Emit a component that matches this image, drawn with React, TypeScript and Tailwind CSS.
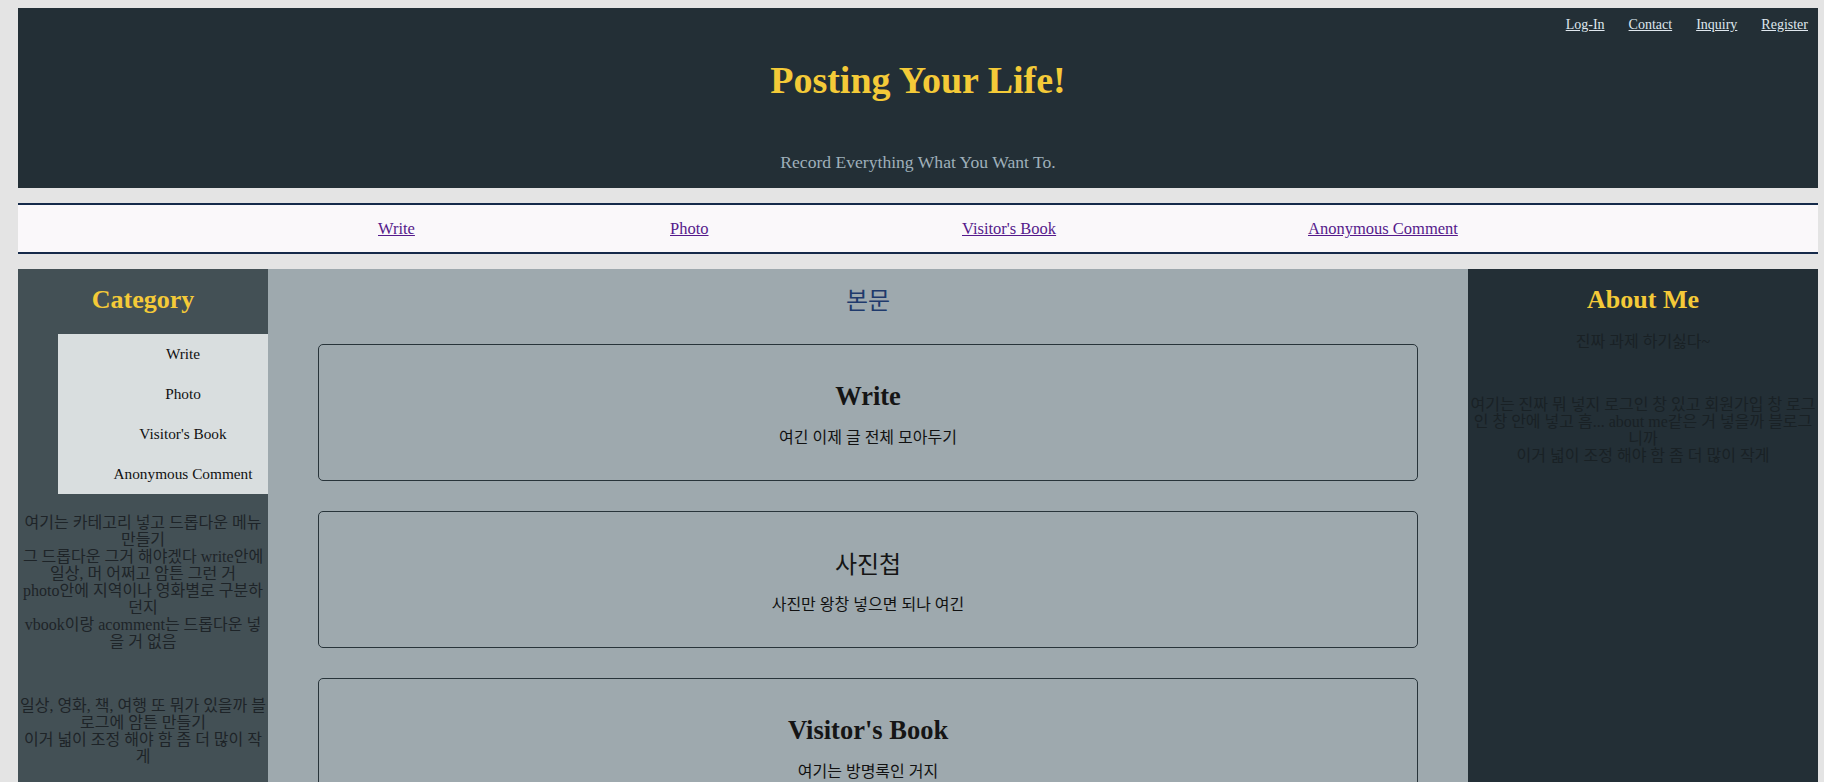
export default function App() {
  const leftLines1 = [
    "여기는 카테고리 넣고 드롭다운 메뉴",
    "만들기",
    "그 드롭다운 그거 해야겠다 write안에",
    "일상, 머 어쩌고 암튼 그런 거",
    "photo안에 지역이나 영화별로 구분하",
    "던지",
    "vbook이랑 acomment는 드롭다운 넣",
    "을 거 없음",
  ];
  const leftLines2 = [
    "일상, 영화, 책, 여행 또 뭐가 있을까 블",
    "로그에 암튼 만들기",
    "이거 넓이 조정 해야 함 좀 더 많이 작",
    "게",
  ];
  const rightLines = [
    "여기는 진짜 뭐 넣지 로그인 창 있고 회원가입 창 로그",
    "인 창 안에 넣고 흠... about me같은 거 넣을까 블로그",
    "니까",
    "이거 넓이 조정 해야 함 좀 더 많이 작게",
  ];

  return (
    <div className="min-h-screen bg-[#e4e4e4] pt-2 pl-[18px] pr-[6px] font-['Liberation_Serif','Noto_Sans_CJK_KR',serif]">
      <div className="w-[1800px]">
        <header className="h-[180px] bg-[#232f36] flex flex-col">
          <div className="flex justify-end gap-[24px] pr-[10px] pt-[9px] text-[14px] leading-[16px] text-[#dfe7ee]">
            <a className="underline" href="#">Log-In</a>
            <a className="underline" href="#">Contact</a>
            <a className="underline" href="#">Inquiry</a>
            <a className="underline" href="#">Register</a>
          </div>
          <h1 className="mt-[27px] text-center text-[38px] leading-[40px] font-bold text-[#f4ca38]">
            Posting Your Life!
          </h1>
          <p className="mt-[52px] text-center text-[17.6px] leading-[20px] text-[#9fb0ba]">
            Record Everything What You Want To.
          </p>
        </header>

        <nav className="mt-[15px] border-y-2 border-[#152a4a] bg-[#faf8fa] pt-[14px] pb-[13px] text-[16.5px] leading-[20px]">
          <div className="flex pl-[360px] text-[#551a8b]">
            <span className="w-[292px]">
              <a className="underline" href="#">Write</a>
            </span>
            <span className="w-[292px]">
              <a className="underline" href="#">Photo</a>
            </span>
            <span className="w-[346px]">
              <a className="underline" href="#">Visitor's Book</a>
            </span>
            <span>
              <a className="underline" href="#">Anonymous Comment</a>
            </span>
          </div>
        </nav>

        <main className="mt-[15px] flex">
          <aside className="w-[250px] shrink-0 bg-[#435055] pt-[16px]">
            <h2 className="text-center text-[26px] leading-[30px] font-bold text-[#f4ca38]">Category</h2>
            <ul className="mt-[19px] ml-[40px] bg-[#d9dedf] pl-[40px] text-[15.3px] leading-[18px] text-[#111111]">
              <li className="h-[40px] flex items-center justify-center">Write</li>
              <li className="h-[40px] flex items-center justify-center">Photo</li>
              <li className="h-[40px] flex items-center justify-center">Visitor's Book</li>
              <li className="h-[40px] flex items-center justify-center">Anonymous Comment</li>
            </ul>
            <div className="mt-[20px] text-center text-[16px] leading-[17px] text-[#1e2428] whitespace-nowrap">
              {leftLines1.map((l) => (
                <div key={l}>{l}</div>
              ))}
            </div>
            <div className="mt-[47px] text-center text-[16px] leading-[17px] text-[#1e2428] whitespace-nowrap">
              {leftLines2.map((l) => (
                <div key={l}>{l}</div>
              ))}
            </div>
          </aside>

          <section className="w-[1200px] shrink-0 bg-[#9ea9ae] pt-[18px] pb-[40px]">
            <h2 className="text-center text-[24px] leading-[28px] text-[#1f3a6c]">본문</h2>
            <div className="mt-[29px] px-[50px] flex flex-col gap-[30px]">
              <div className="h-[137px] rounded-[5px] border border-[#28343a] pt-[36px] text-center">
                <h3 className="text-[26.5px] leading-[30px] font-bold text-[#151515]">Write</h3>
                <p className="mt-[18px] text-[16px] leading-[18px] text-[#111111]">여긴 이제 글 전체 모아두기</p>
              </div>
              <div className="h-[137px] rounded-[5px] border border-[#28343a] pt-[38px] text-center">
                <h3 className="text-[24px] leading-[30px] font-normal text-[#151515]">사진첩</h3>
                <p className="mt-[16px] text-[16px] leading-[18px] text-[#111111]">사진만 왕창 넣으면 되나 여긴</p>
              </div>
              <div className="h-[137px] rounded-[5px] border border-[#28343a] pt-[36px] text-center">
                <h3 className="text-[26.5px] leading-[30px] font-bold text-[#151515]">Visitor's Book</h3>
                <p className="mt-[18px] text-[16px] leading-[18px] text-[#111111]">여기는 방명록인 거지</p>
              </div>
            </div>
          </section>

          <aside className="w-[350px] shrink-0 bg-[#232f36] pt-[16px]">
            <h2 className="text-center text-[26px] leading-[30px] font-bold text-[#f4ca38]">About Me</h2>
            <p className="mt-[18px] text-center text-[16px] leading-[17px] text-[#192125]">진짜 과제 하기싫다~</p>
            <div className="mt-[46px] text-center text-[16px] leading-[17px] text-[#192125] whitespace-nowrap">
              {rightLines.map((l) => (
                <div key={l}>{l}</div>
              ))}
            </div>
          </aside>
        </main>
      </div>
    </div>
  );
}
